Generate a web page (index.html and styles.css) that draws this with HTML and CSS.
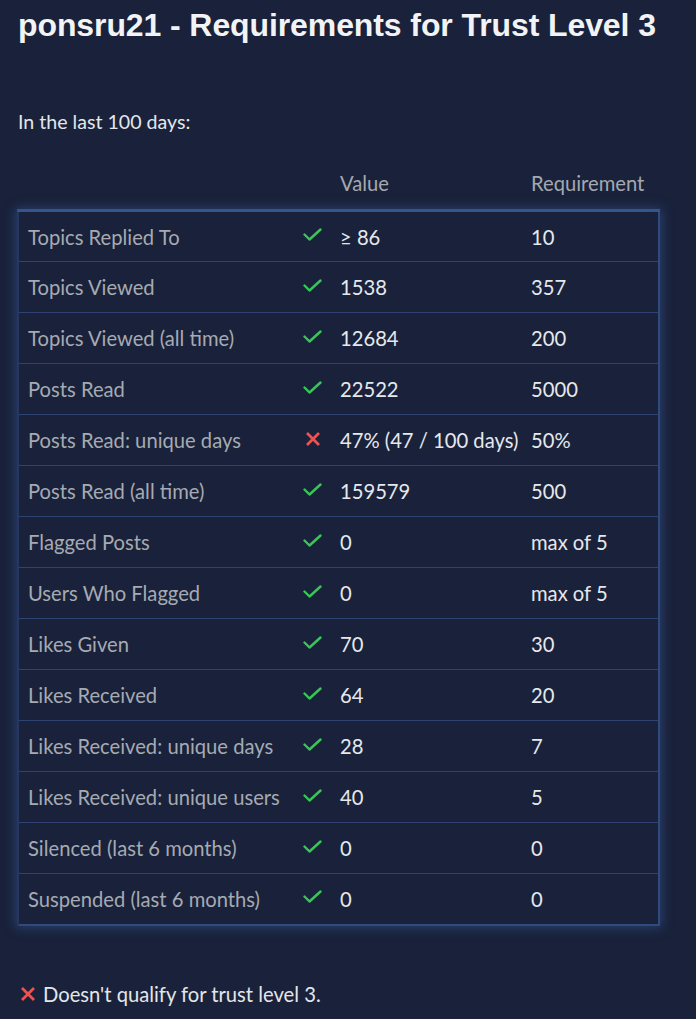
FILE: index.html
```html
<!DOCTYPE html>
<html>
<head>
<meta charset="utf-8">
<link rel="stylesheet" href="styles.css">
</head>
<body>
<div class="page">
  <h1 class="title">ponsru21 - Requirements for Trust Level 3</h1>
  <p class="intro">In the last 100 days:</p>
  <table class="req">
    <colgroup><col class="w-label"><col class="w-icon"><col class="w-val"><col class="w-req"></colgroup>
    <thead>
      <tr><th></th><th></th><th>Value</th><th>Requirement</th></tr>
    </thead>
    <tbody>
      <tr><td class="c-label">Topics Replied To</td><td class="c-icon"><svg class="ok" viewBox="0 0 19 13"><polyline points="1.5,6.5 6.5,11.5 17.5,1.5"/></svg></td><td class="c-val">≥ 86</td><td class="c-req">10</td></tr>
      <tr><td class="c-label">Topics Viewed</td><td class="c-icon"><svg class="ok" viewBox="0 0 19 13"><polyline points="1.5,6.5 6.5,11.5 17.5,1.5"/></svg></td><td class="c-val">1538</td><td class="c-req">357</td></tr>
      <tr><td class="c-label">Topics Viewed (all time)</td><td class="c-icon"><svg class="ok" viewBox="0 0 19 13"><polyline points="1.5,6.5 6.5,11.5 17.5,1.5"/></svg></td><td class="c-val">12684</td><td class="c-req">200</td></tr>
      <tr><td class="c-label">Posts Read</td><td class="c-icon"><svg class="ok" viewBox="0 0 19 13"><polyline points="1.5,6.5 6.5,11.5 17.5,1.5"/></svg></td><td class="c-val">22522</td><td class="c-req">5000</td></tr>
      <tr><td class="c-label">Posts Read: unique days</td><td class="c-icon"><svg class="bad" viewBox="0 0 14 14"><path d="M1 1 L13 13 M13 1 L1 13"/></svg></td><td class="c-val">47% (47 / 100 days)</td><td class="c-req">50%</td></tr>
      <tr><td class="c-label">Posts Read (all time)</td><td class="c-icon"><svg class="ok" viewBox="0 0 19 13"><polyline points="1.5,6.5 6.5,11.5 17.5,1.5"/></svg></td><td class="c-val">159579</td><td class="c-req">500</td></tr>
      <tr><td class="c-label">Flagged Posts</td><td class="c-icon"><svg class="ok" viewBox="0 0 19 13"><polyline points="1.5,6.5 6.5,11.5 17.5,1.5"/></svg></td><td class="c-val">0</td><td class="c-req">max of 5</td></tr>
      <tr><td class="c-label">Users Who Flagged</td><td class="c-icon"><svg class="ok" viewBox="0 0 19 13"><polyline points="1.5,6.5 6.5,11.5 17.5,1.5"/></svg></td><td class="c-val">0</td><td class="c-req">max of 5</td></tr>
      <tr><td class="c-label">Likes Given</td><td class="c-icon"><svg class="ok" viewBox="0 0 19 13"><polyline points="1.5,6.5 6.5,11.5 17.5,1.5"/></svg></td><td class="c-val">70</td><td class="c-req">30</td></tr>
      <tr><td class="c-label">Likes Received</td><td class="c-icon"><svg class="ok" viewBox="0 0 19 13"><polyline points="1.5,6.5 6.5,11.5 17.5,1.5"/></svg></td><td class="c-val">64</td><td class="c-req">20</td></tr>
      <tr><td class="c-label">Likes Received: unique days</td><td class="c-icon"><svg class="ok" viewBox="0 0 19 13"><polyline points="1.5,6.5 6.5,11.5 17.5,1.5"/></svg></td><td class="c-val">28</td><td class="c-req">7</td></tr>
      <tr><td class="c-label">Likes Received: unique users</td><td class="c-icon"><svg class="ok" viewBox="0 0 19 13"><polyline points="1.5,6.5 6.5,11.5 17.5,1.5"/></svg></td><td class="c-val">40</td><td class="c-req">5</td></tr>
      <tr><td class="c-label">Silenced (last 6 months)</td><td class="c-icon"><svg class="ok" viewBox="0 0 19 13"><polyline points="1.5,6.5 6.5,11.5 17.5,1.5"/></svg></td><td class="c-val">0</td><td class="c-req">0</td></tr>
      <tr><td class="c-label">Suspended (last 6 months)</td><td class="c-icon"><svg class="ok" viewBox="0 0 19 13"><polyline points="1.5,6.5 6.5,11.5 17.5,1.5"/></svg></td><td class="c-val">0</td><td class="c-req">0</td></tr>
    </tbody>
  </table>
  <p class="result"><svg class="bad" viewBox="0 0 14 14"><path d="M1 1 L13 13 M13 1 L1 13"/></svg>Doesn't qualify for trust level 3.</p>
</div>
</body>
</html>
```

FILE: styles.css
```css
html, body {
  margin: 0;
  padding: 0;
  background: #19223a;
}
body {
  font-family: "Lato", "Noto Sans", sans-serif;
  color: #e4e6ea;
}
.page {
  padding: 0 18px;
  width: 696px;
  box-sizing: border-box;
}
.title {
  font-family: "Liberation Sans", Arial, sans-serif;
  font-weight: bold;
  font-size: 32px;
  color: #f2f3f5;
  margin: 0;
  padding-top: 6px;
  line-height: 38px;
  letter-spacing: -0.1px;
}
.intro {
  margin: 66px 0 0 0;
  font-size: 19.6px;
  line-height: 24px;
}
.req {
  margin-top: 23px;
  margin-left: -1px;
  width: 641px;
  table-layout: fixed;
  border-collapse: collapse;
  font-size: 20.2px;
}
.w-label { width: 282px; }
.w-icon { width: 40px; }
.w-val { width: 191px; }
.w-req { width: 128px; }
.req thead th {
  font-weight: normal;
  color: #a4a8b0;
  text-align: left;
  height: 38px;
  padding: 0 0 14px 0;
  vertical-align: bottom;
  line-height: 24px;
}
.req tbody {
  box-shadow: 0 0 10px 3px rgba(55, 90, 160, 0.5);
}
.req tbody tr {
  height: 51px;
  border-bottom: 1px solid #2c4373;
}
.req tbody tr:first-child {
  border-top: 3px solid #34558c;
}
.req tbody tr:last-child {
  border-bottom: 2px solid #2f4a7c;
}
.req tbody td {
  padding: 0;
  vertical-align: middle;
  line-height: 24px;
  white-space: nowrap;
}
.req tbody td:first-child {
  border-left: 2px solid #24375e;
}
.req tbody td:last-child {
  border-right: 2px solid #2f4a7c;
}
.c-label {
  padding-left: 9px !important;
  color: #a6aab2;
}
.c-val, .c-req {
  color: #e6e8ec;
}
.ok {
  display: block;
  width: 19px;
  height: 13px;
  margin-left: 3px;
  margin-top: -4px;
  fill: none;
  stroke: #38c757;
  stroke-width: 2.4;
  stroke-linecap: round;
  stroke-linejoin: round;
}
.bad {
  width: 14px;
  height: 14px;
  fill: none;
  stroke: #f0524f;
  stroke-width: 2.8;
  stroke-linecap: butt;
}
.c-icon .bad {
  display: block;
  margin-left: 6px;
  margin-top: -3px;
}
.result {
  margin: 56px 0 0 0;
  font-size: 20.2px;
  line-height: 24px;
  display: flex;
  align-items: center;
}
.result .bad {
  margin-left: 3px;
  margin-right: 8px;
  flex: none;
}
```
